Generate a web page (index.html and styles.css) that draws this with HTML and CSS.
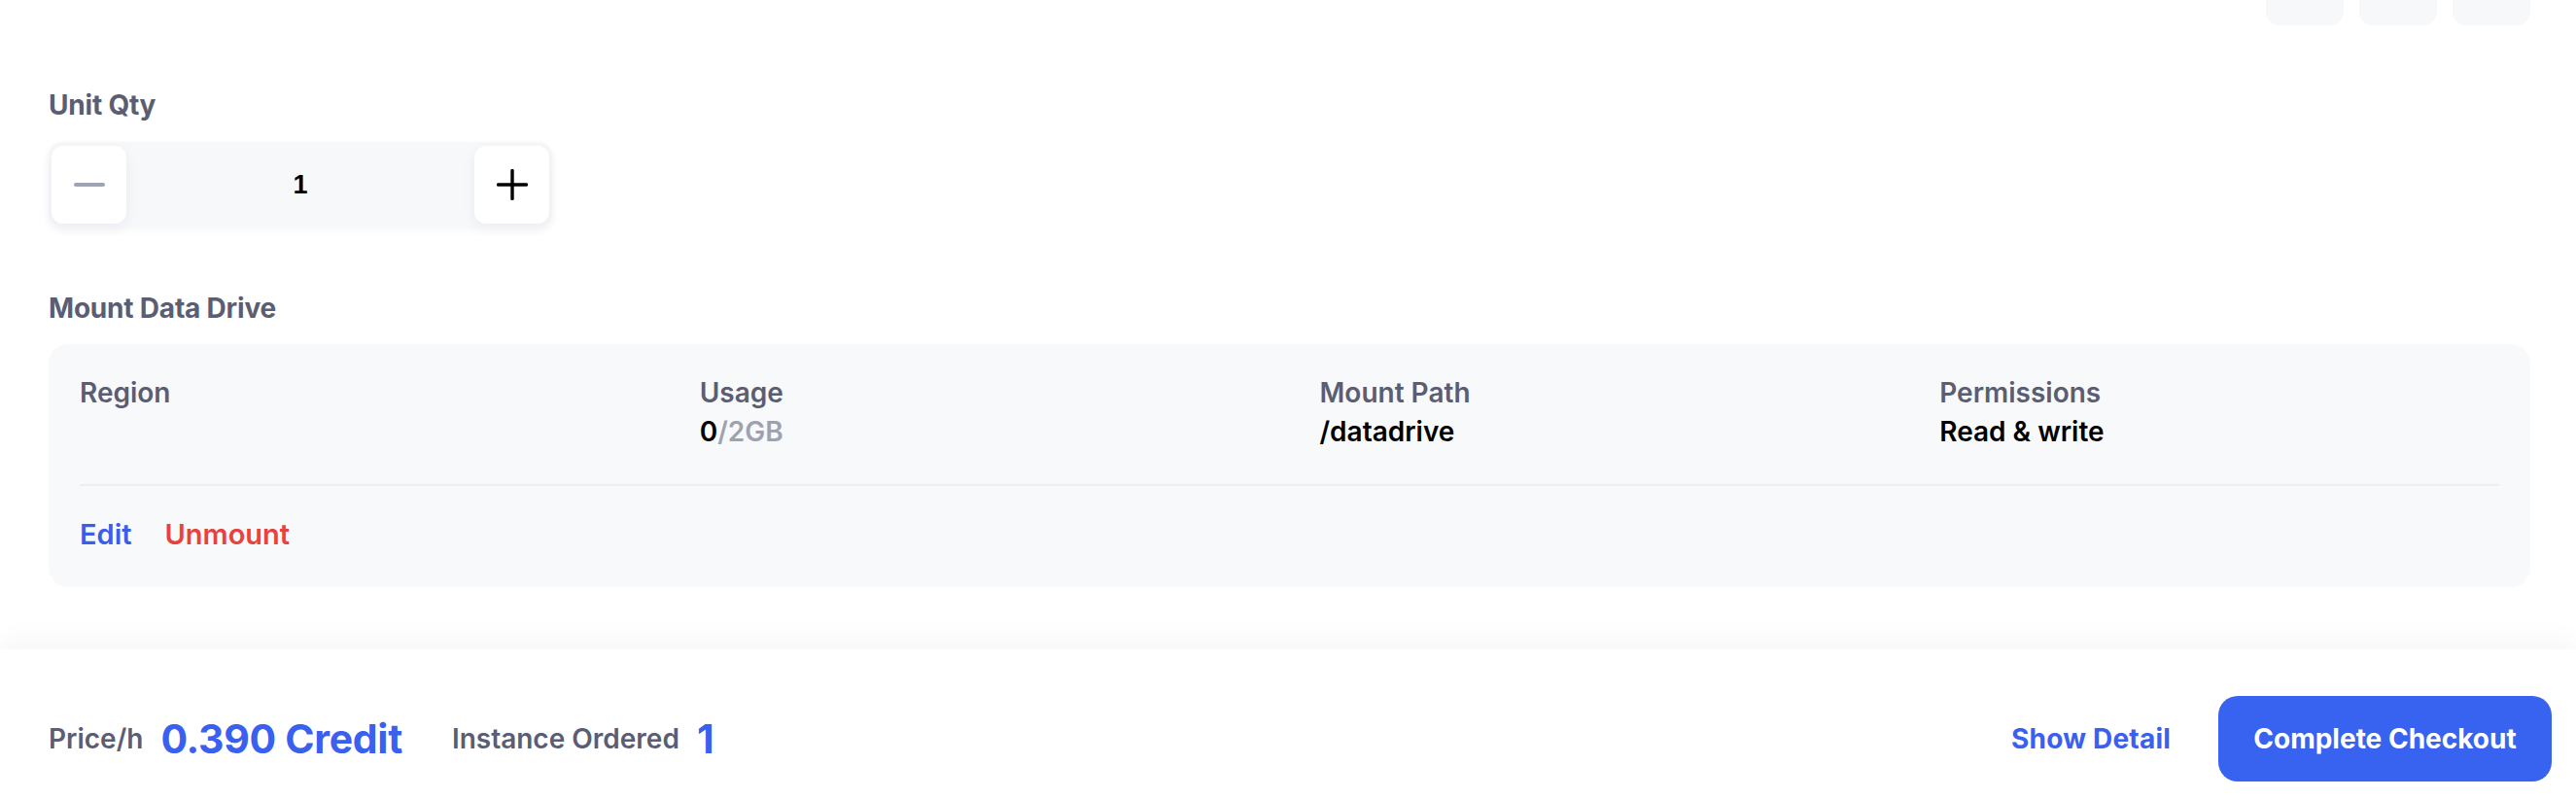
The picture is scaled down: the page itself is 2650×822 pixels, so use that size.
FILE: index.html
```html
<!DOCTYPE html>
<html lang="en">
<head>
<meta charset="utf-8">
<title>Checkout</title>
<link rel="stylesheet" href="styles.css">
</head>
<body>
<main class="main">
  <div class="top-tabs">
    <span class="tab"></span>
    <span class="tab"></span>
    <span class="tab"></span>
  </div>

  <section class="section qty-section">
    <div class="section-title">Unit Qty</div>
    <div class="stepper">
      <button class="step-btn" type="button" aria-label="Decrease">
        <svg width="32" height="32" viewBox="0 0 32 32"><path d="M2 16h28" stroke="#9fa4b4" stroke-width="4" stroke-linecap="round"/></svg>
      </button>
      <div class="step-value">1</div>
      <button class="step-btn" type="button" aria-label="Increase">
        <svg width="32" height="32" viewBox="0 0 32 32"><path d="M16 1.5v29M1.5 16h29" stroke="#000" stroke-width="3.4" stroke-linecap="round"/></svg>
      </button>
    </div>
  </section>

  <section class="section drive-section">
    <div class="section-title">Mount Data Drive</div>
    <div class="drive-card">
      <div class="drive-grid">
        <div class="drive-col">
          <div class="drive-label">Region</div>
        </div>
        <div class="drive-col">
          <div class="drive-label">Usage</div>
          <div class="drive-value"><span class="used">0</span><span class="total">/2GB</span></div>
        </div>
        <div class="drive-col">
          <div class="drive-label">Mount Path</div>
          <div class="drive-value">/datadrive</div>
        </div>
        <div class="drive-col">
          <div class="drive-label">Permissions</div>
          <div class="drive-value">Read &amp; write</div>
        </div>
      </div>
      <div class="divider"></div>
      <div class="drive-actions">
        <a class="action edit">Edit</a>
        <a class="action unmount">Unmount</a>
      </div>
    </div>
  </section>
</main>

<footer class="footer">
  <div class="footer-left">
    <span class="f-label">Price/h</span>
    <span class="f-big">0.390 Credit</span>
    <span class="f-label f-gap">Instance Ordered</span>
    <span class="f-big">1</span>
  </div>
  <div class="footer-right">
    <a class="show-detail">Show Detail</a>
    <button class="checkout" type="button">Complete Checkout</button>
  </div>
</footer>
</body>
</html>
```

FILE: styles.css
```css
* {
  box-sizing: border-box;
}

html, body {
  margin: 0;
  padding: 0;
  height: 100%;
}

body {
  display: flex;
  flex-direction: column;
  height: 822px;
  overflow: hidden;
  background: #ffffff;
  font-family: "Inter", "Noto Sans", sans-serif;
  color: #000;
}

.main {
  flex: 1 1 auto;
  padding: 0 47px 0 50px;
}

.top-tabs {
  display: flex;
  justify-content: flex-end;
  gap: 16px;
  height: 26px;
}

.tab {
  width: 80px;
  height: 26px;
  background: #f7f8fa;
  border-radius: 0 0 14px 14px;
}

.section-title {
  font-size: 28px;
  line-height: 40px;
  font-weight: 700;
  color: #5b5e73;
  letter-spacing: -0.2px;
}

.qty-section {
  margin-top: 62px;
}

.stepper {
  margin-top: 18px;
  width: 518px;
  height: 88px;
  padding: 4px 3px;
  display: flex;
  align-items: stretch;
  background: #f7f8fa;
  border-radius: 14px;
  box-shadow: 0 3px 10px rgba(30, 35, 60, 0.035);
}

.step-btn {
  width: 77px;
  border: none;
  padding: 0;
  background: #ffffff;
  border-radius: 12px;
  box-shadow: 0 4px 14px rgba(30, 35, 60, 0.06);
  display: flex;
  align-items: center;
  justify-content: center;
}

.step-value {
  flex: 1;
  display: flex;
  align-items: center;
  justify-content: center;
  font-family: "Liberation Sans", Arial, sans-serif;
  font-weight: 700;
  font-size: 27px;
  color: #000;
}

.drive-section {
  margin-top: 63px;
}

.drive-card {
  margin-top: 17px;
  background: #f8f9fb;
  border-radius: 20px;
  padding: 30px 32px 34px 32px;
}

.drive-grid {
  display: grid;
  grid-template-columns: repeat(4, 1fr);
  column-gap: 62px;
}

.drive-label {
  font-size: 28px;
  line-height: 40px;
  font-weight: 600;
  color: #5b5e73;
}

.drive-value {
  font-size: 28px;
  line-height: 40px;
  font-weight: 600;
  color: #000;
}

.drive-value .total {
  color: #9ea2b0;
}

.divider {
  margin-top: 34px;
  height: 2px;
  background: #eceef1;
}

.drive-actions {
  margin-top: 30px;
  display: flex;
  gap: 34px;
}

.action {
  font-size: 29px;
  line-height: 40px;
  font-weight: 600;
}

.action.edit {
  color: #3a5ee9;
}

.action.unmount {
  color: #e8423f;
}

.footer {
  flex: 0 0 154px;
  height: 154px;
  padding: 48px 25px 0 50px;
  display: flex;
  justify-content: space-between;
  align-items: flex-start;
  background: #ffffff;
  box-shadow: 0 -10px 26px rgba(60, 40, 60, 0.035);
  position: relative;
}

.footer-left,
.footer-right {
  display: flex;
  align-items: center;
  height: 88px;
}

.f-label {
  font-size: 28px;
  line-height: 40px;
  font-weight: 600;
  color: #5b5e73;
  margin-right: 18px;
}

.f-gap {
  margin-left: 51px;
}

.f-big {
  font-size: 41px;
  line-height: 52px;
  font-weight: 700;
  color: #3a60f0;
  letter-spacing: -0.3px;
}

.show-detail {
  font-size: 28px;
  line-height: 40px;
  font-weight: 700;
  color: #3a60f0;
  margin-right: 49px;
  letter-spacing: 0.2px;
}

.checkout {
  width: 343px;
  height: 88px;
  border: none;
  border-radius: 20px;
  background: #3862f0;
  color: #ffffff;
  font-family: "Inter", "Noto Sans", sans-serif;
  font-size: 28px;
  font-weight: 700;
}
```
